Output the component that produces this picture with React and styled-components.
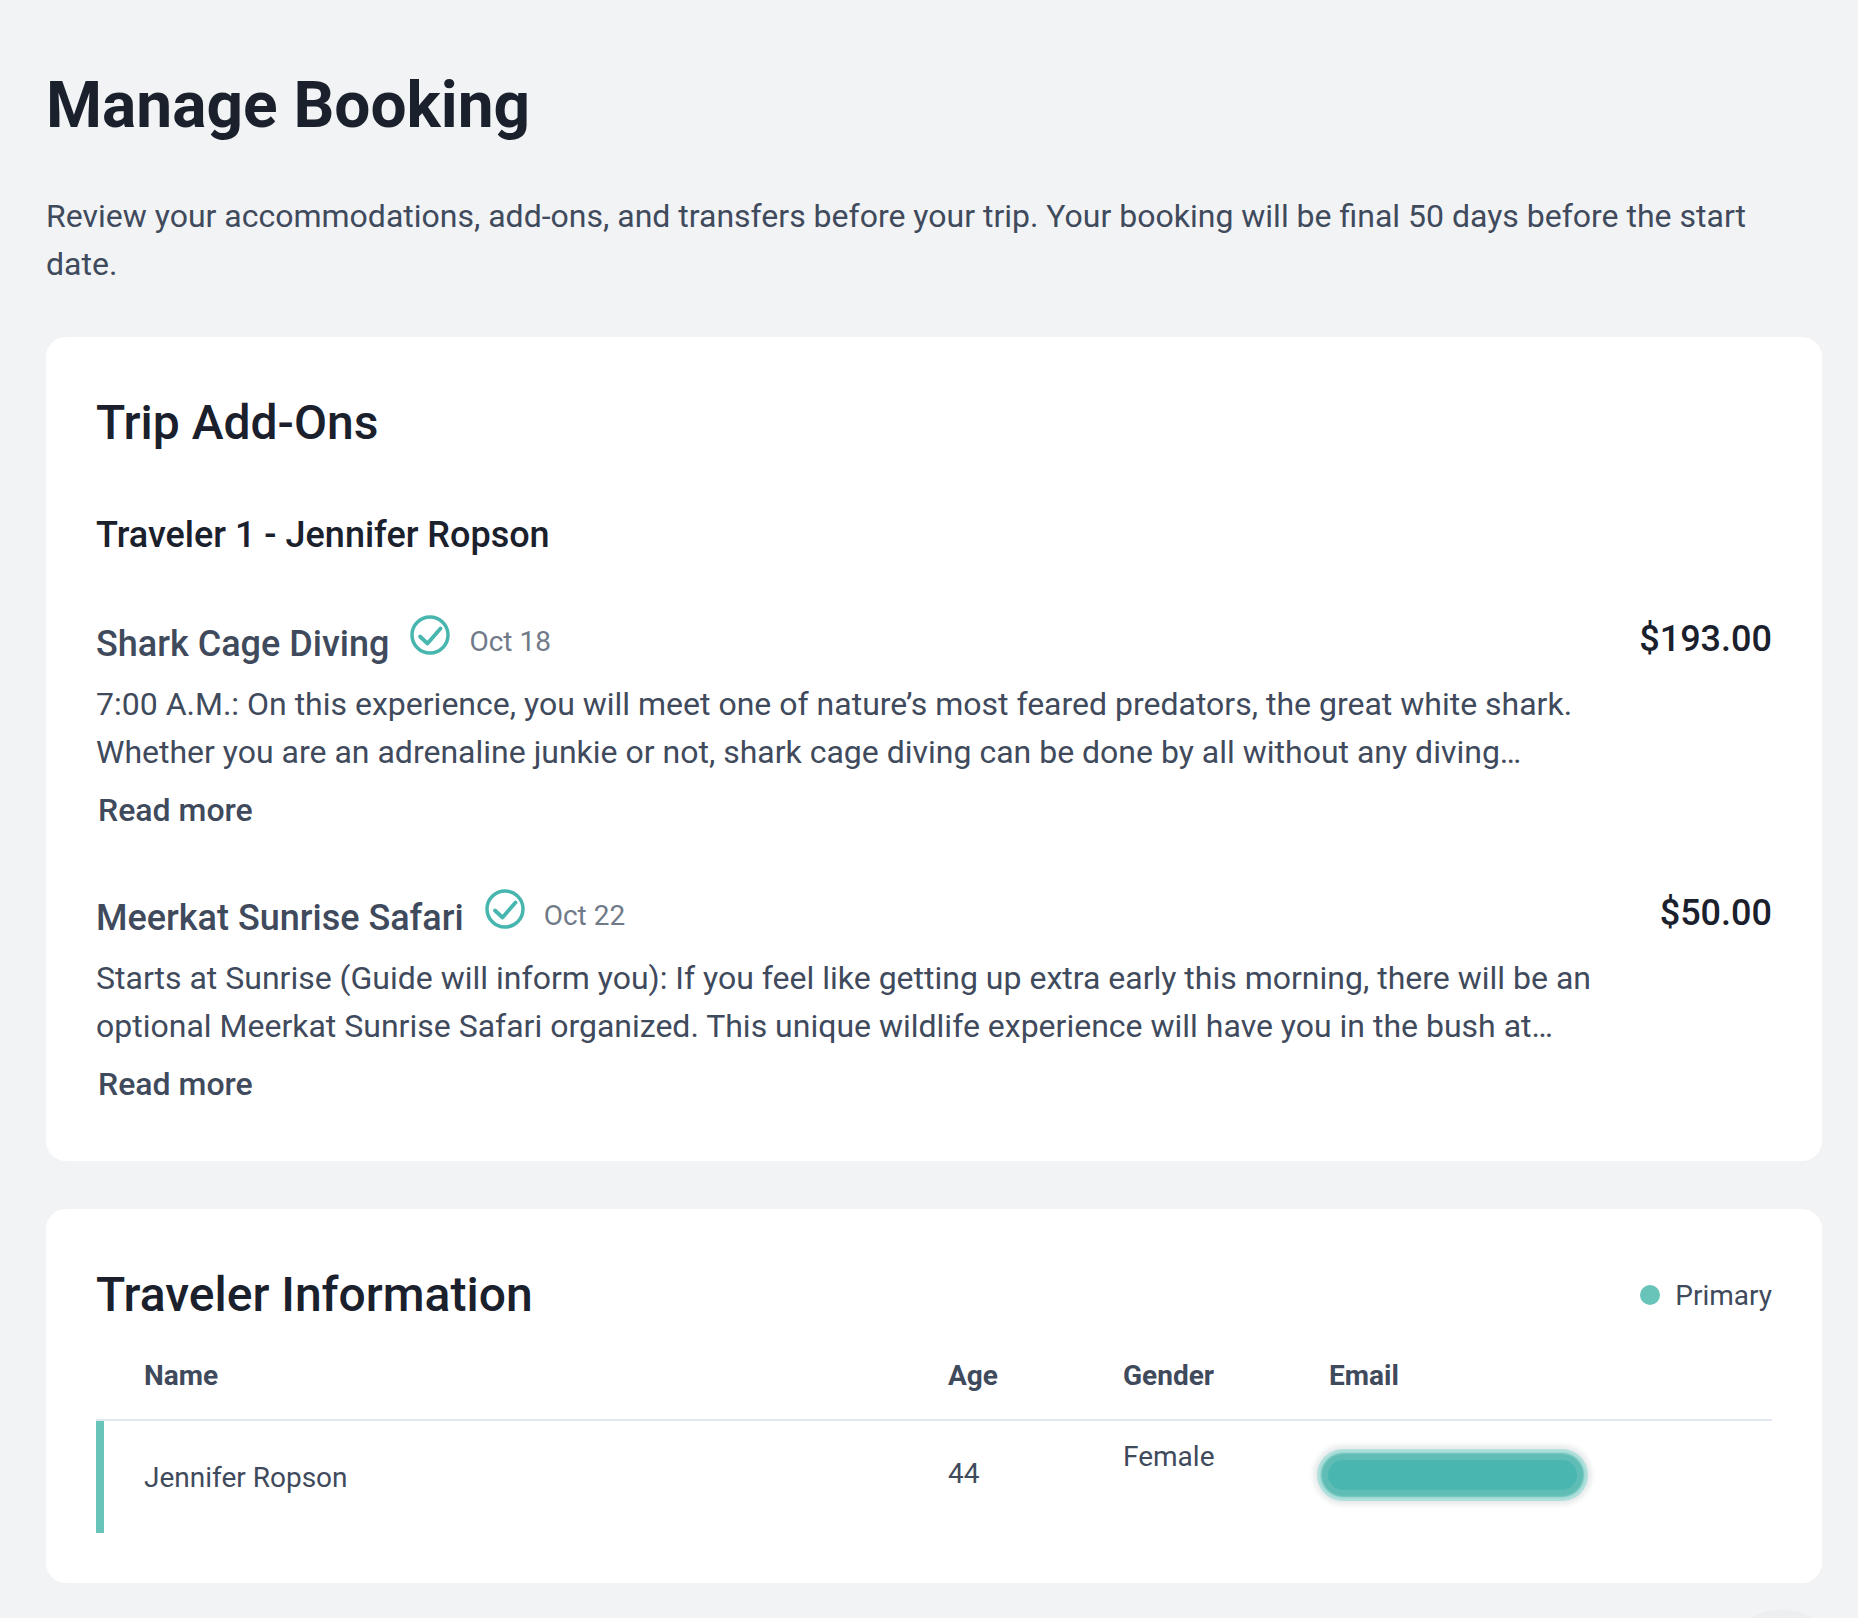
import React from 'react';
import styled, { createGlobalStyle } from 'styled-components';

const GlobalStyle = createGlobalStyle`
  html, body {
    margin: 0;
    padding: 0;
    background: #f2f3f5;
    font-family: Roboto, "Liberation Sans", sans-serif;
  }
`;

const Page = styled.main`
  position: relative;
  box-sizing: border-box;
  height: 1618px;
  padding: 68px 36px 0 46px;
  overflow: hidden;
`;

const PageTitle = styled.h1`
  margin: 0;
  font-size: 64px;
  line-height: 76px;
  font-weight: 700;
  color: #1a202c;
`;

const Intro = styled.p`
  margin: 48px 0 49px;
  font-size: 32px;
  line-height: 48px;
  font-weight: 400;
  color: #3f4a5c;
`;

const Card = styled.section`
  box-sizing: border-box;
  background: #fff;
  border-radius: 20px;
  padding: ${props => props.$padding};
  margin-bottom: ${props => props.$gap || 0};
`;

const CardTitle = styled.h2`
  margin: 0;
  font-size: 48px;
  line-height: 56px;
  font-weight: 500;
  color: #1a202c;
`;

const TravelerName = styled.h3`
  margin: 62px 0 64px;
  font-size: 36px;
  line-height: 44px;
  font-weight: 500;
  color: #1a202c;
`;

const AddOn = styled.article`
  margin-bottom: ${props => props.$last ? 0 : '61px'};
`;

const AddOnHead = styled.div`
  display: flex;
  align-items: flex-start;
  justify-content: space-between;
`;

const AddOnTitleGroup = styled.div`
  display: flex;
  align-items: center;
`;

const AddOnTitle = styled.h4`
  margin: 0;
  padding-top: 1px;
  font-size: 36px;
  line-height: 44px;
  font-weight: 500;
  color: #3f4a5c;
`;

const CheckIcon = styled.svg`
  width: 40px;
  height: 40px;
  margin: -17px 19px 0 21px;
  color: #47b6ae;
`;

const AddOnDate = styled.span`
  margin-top: -4px;
  font-size: 28px;
  color: #717a88;
`;

const Price = styled.div`
  margin-top: -2px;
  font-size: 36px;
  line-height: 40px;
  font-weight: 500;
  color: #1a202c;
`;

const Description = styled.p`
  margin: 14px 0 0;
  max-width: 1560px;
  font-size: 32px;
  line-height: 48px;
  color: #3f4a5c;
`;

const ReadMore = styled.button`
  display: block;
  margin: 10px 0 0 2px;
  padding: 0;
  border: 0;
  background: none;
  font-family: inherit;
  font-size: 32px;
  line-height: 48px;
  font-weight: 500;
  color: #3f4a5c;
`;

const TravelerHead = styled.div`
  display: flex;
  align-items: center;
  justify-content: space-between;
`;

const Legend = styled.div`
  display: flex;
  align-items: center;
  gap: 15px;
  font-size: 28px;
  color: #3f4a5c;
`;

const LegendDot = styled.span`
  width: 20px;
  height: 20px;
  border-radius: 50%;
  background: #68c4b8;
`;

const Table = styled.div`
  margin-top: 9px;
`;

const TableRow = styled.div`
  display: grid;
  grid-template-columns: 804px 175px 206px 1fr;
  min-height: ${props => props.$height};
  font-size: 28px;
  line-height: 36px;
  color: #3f4a5c;
  font-weight: ${props => props.$header ? 700 : 400};
  border-left: ${props => props.$primary ? '8px solid #68c4b8' : '0'};
  padding-left: ${props => props.$primary ? '40px' : '48px'};
  align-items: ${props => props.$header ? 'center' : 'start'};
`;

const HeaderDivider = styled.div`
  height: 2px;
  background: #e2e8f0;
`;

const Cell = styled.div`
  padding-top: ${props => props.$top};
`;

const RedactedEmail = styled.div`
  width: 249px;
  height: 30px;
  margin: 39px 0 0 -1px;
  border-radius: 15px;
  background: #49b6b0;
  box-shadow: 0 0 2px 7px #5fbdb5, 0 0 0 11px #b0e0dc, 0 0 5px 15px #e8ebec;
`;

const WidgetShadow = styled.div`
  position: absolute;
  right: 41px;
  bottom: -24px;
  width: 70px;
  height: 32px;
  border-radius: 50%;
  background: #eceef0;
`;

const addOns = [
  {
    title: 'Shark Cage Diving',
    date: 'Oct 18',
    price: '$193.00',
    text: '7:00 A.M.: On this experience, you will meet one of nature’s most feared predators, the great white shark. Whether you are an adrenaline junkie or not, shark cage diving can be done by all without any diving…',
  },
  {
    title: 'Meerkat Sunrise Safari',
    date: 'Oct 22',
    price: '$50.00',
    text: 'Starts at Sunrise (Guide will inform you): If you feel like getting up extra early this morning, there will be an optional Meerkat Sunrise Safari organized. This unique wildlife experience will have you in the bush at…',
  },
];

const App = () => (
  <Page>
    <GlobalStyle />
    <PageTitle>Manage Booking</PageTitle>
    <Intro>
      Review your accommodations, add-ons, and transfers before your trip. Your booking will be final 50 days before the start date.
    </Intro>

    <Card $padding="58px 50px 53px" $gap="48px">
      <CardTitle>Trip Add-Ons</CardTitle>
      <TravelerName>Traveler 1 - Jennifer Ropson</TravelerName>
      {addOns.map((addOn, index) => (
        <AddOn key={addOn.title} $last={index === addOns.length - 1}>
          <AddOnHead>
            <AddOnTitleGroup>
              <AddOnTitle>{addOn.title}</AddOnTitle>
              <CheckIcon viewBox="0 0 40 40" fill="none" stroke="currentColor">
                <circle cx="20" cy="20" r="18" strokeWidth="3.5" />
                <path d="M10 21.5l7.5 7 13-15" strokeWidth="3.8" strokeLinecap="round" strokeLinejoin="round" />
              </CheckIcon>
              <AddOnDate>{addOn.date}</AddOnDate>
            </AddOnTitleGroup>
            <Price>{addOn.price}</Price>
          </AddOnHead>
          <Description>{addOn.text}</Description>
          <ReadMore type="button">Read more</ReadMore>
        </AddOn>
      ))}
    </Card>

    <Card $padding="58px 50px 50px">
      <TravelerHead>
        <CardTitle>Traveler Information</CardTitle>
        <Legend>
          <LegendDot />
          Primary
        </Legend>
      </TravelerHead>
      <Table>
        <TableRow $header $height="87px">
          <div>Name</div>
          <div>Age</div>
          <div>Gender</div>
          <div>Email</div>
        </TableRow>
        <HeaderDivider />
        <TableRow $primary $height="112px">
          <Cell $top="39px">Jennifer Ropson</Cell>
          <Cell $top="35px">44</Cell>
          <Cell $top="18px">Female</Cell>
          <Cell $top="0"><RedactedEmail /></Cell>
        </TableRow>
      </Table>
    </Card>

    <WidgetShadow />
  </Page>
);

export default App;
